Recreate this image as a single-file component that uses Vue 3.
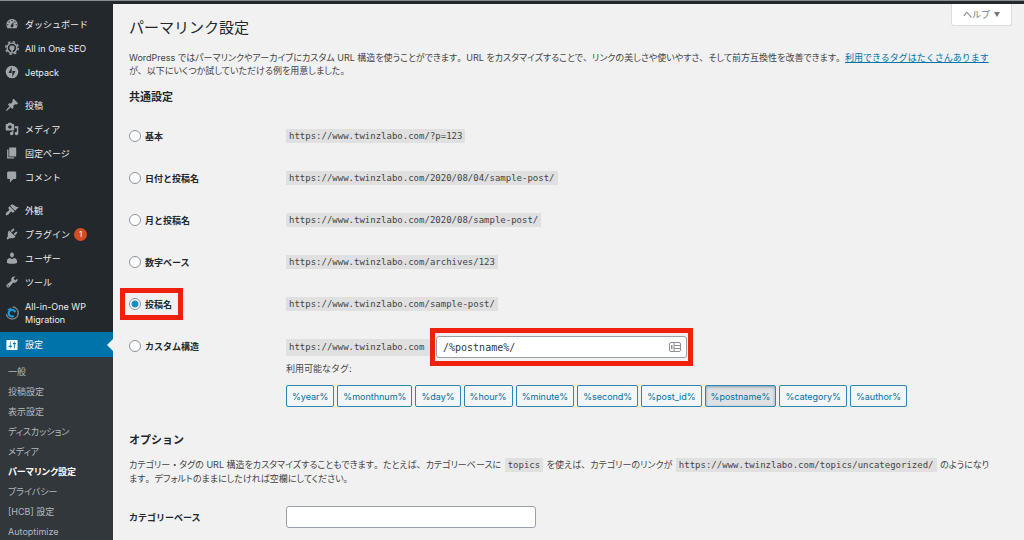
<script setup>
import { ref } from 'vue'

const menuGroups = [
  [
    {
      label: 'ダッシュボード',
      path: 'M3.76 16h12.48c1.1-1.37 1.76-3.11 1.76-5 0-4.42-3.58-8-8-8s-8 3.58-8 8c0 1.89.66 3.63 1.76 5zM10 4c.55 0 1 .45 1 1s-.45 1-1 1-1-.45-1-1 .45-1 1-1zM6 6c.55 0 1 .45 1 1s-.45 1-1 1-1-.45-1-1 .45-1 1-1zm8 0c.55 0 1 .45 1 1s-.45 1-1 1-1-.45-1-1 .45-1 1-1zm-5.37 5.55L12 7v6c0 1.1-.9 2-2 2s-2-.9-2-2c0-.57.24-1.08.63-1.45zM4 10c.55 0 1 .45 1 1s-.45 1-1 1-1-.45-1-1 .45-1 1-1zm12 0c.55 0 1 .45 1 1s-.45 1-1 1-1-.45-1-1 .45-1 1-1z',
    },
    { label: 'All in One SEO', icon: 'seo' },
    { label: 'Jetpack', icon: 'jetpack' },
  ],
  [
    {
      label: '投稿',
      path: 'M10.44 3.02l1.82-1.82 6.36 6.35-1.83 1.82c-1.05-.68-2.48-.57-3.41.36l-.75.75c-.92.93-1.04 2.35-.35 3.41l-1.83 1.82-2.41-2.41-2.8 2.79c-.42.42-3.38 2.71-3.8 2.29s1.86-3.39 2.28-3.81l2.79-2.79L4.1 9.36l1.83-1.82c1.05.69 2.48.57 3.4-.36l.75-.75c.93-.92 1.05-2.35.36-3.41z',
    },
    {
      label: 'メディア',
      path: 'M13 11V4c0-.55-.45-1-1-1h-1.67L9 1H5L3.67 3H2c-.55 0-1 .45-1 1v7c0 .55.45 1 1 1h10c.55 0 1-.45 1-1zM7 4.5c1.38 0 2.5 1.12 2.5 2.5S8.38 9.5 7 9.5 4.5 8.38 4.5 7 5.62 4.5 7 4.5zM14 6h5v10.5c0 1.38-1.12 2.5-2.5 2.5S14 17.88 14 16.5s1.12-2.5 2.5-2.5c.17 0 .34.02.5.05V9h-3V6zm-4 8.05V13h2v3.5c0 1.38-1.12 2.5-2.5 2.5S7 17.88 7 16.5 8.12 14 9.5 14c.17 0 .34.02.5.05z',
    },
    { label: '固定ページ', path: 'M6 15V2h10v13H6zm-1 1h8v2H3V5h2v11z' },
    {
      label: 'コメント',
      path: 'M5 2h9c1.1 0 2 .9 2 2v7c0 1.1-.9 2-2 2h-2l-5 5v-5H5c-1.1 0-2-.9-2-2V4c0-1.1.9-2 2-2z',
    },
  ],
  [
    {
      label: '外観',
      path: 'M14.48 11.06L7.41 3.99l1.5-1.5c.5-.56 2.3-.47 3.51.32 1.21.8 1.43 1.28 2.91 2.1 1.18.64 2.45 1.26 4.45.85zm-.71.71L6.7 4.7 4.93 6.47c-.39.39-.39 1.02 0 1.41l1.06 1.06c.39.39.39 1.03 0 1.42-.6.6-1.43 1.11-2.21 1.69-.35.26-.7.53-1.01.84C1.43 14.23.4 16.08 1.4 17.07c.99 1 2.84-.03 4.18-1.36.31-.31.58-.66.85-1.02.57-.78 1.08-1.61 1.69-2.21.39-.39 1.02-.39 1.41 0l1.06 1.06c.39.39 1.02.39 1.41 0z',
    },
    {
      label: 'プラグイン',
      count: 1,
      path: 'M13.11 4.36L9.87 7.6 8 5.73l3.24-3.24c.35-.34 1.05-.2 1.56.32.52.51.66 1.21.31 1.55zm-8 1.77l.91-1.12 9.01 9.01-1.19.84c-.71.71-2.63 1.16-3.82 1.16H6.14L4.9 17.26c-.59.59-1.54.59-2.12 0-.59-.58-.59-1.53 0-2.12l1.24-1.24v-3.88c0-1.13.4-3.19 1.09-3.89zm7.26 3.97l3.24-3.24c.34-.35 1.04-.21 1.55.31.52.51.66 1.21.31 1.55l-3.24 3.25z',
    },
    {
      label: 'ユーザー',
      path: 'M10 9.25c-2.27 0-2.73-3.44-2.73-3.44C7 4.02 7.82 2 9.97 2c2.16 0 2.98 2.02 2.71 3.81 0 0-.41 3.44-2.68 3.44zm0 2.57L12.72 10c2.39 0 4.52 2.33 4.52 4.53v2.49s-3.65 1.13-7.24 1.13c-3.65 0-7.24-1.13-7.24-1.13v-2.49c0-2.25 1.94-4.48 4.47-4.48z',
    },
    {
      label: 'ツール',
      path: 'M16.68 9.77c-1.34 1.34-3.3 1.67-4.95.99l-5.41 6.52c-.99.99-2.59.99-3.58 0s-.99-2.59 0-3.57l6.52-5.42c-.68-1.65-.35-3.61.99-4.95 1.28-1.28 3.12-1.62 4.72-1.06l-2.89 2.89 2.82 2.82 2.86-2.87c.53 1.58.18 3.39-1.08 4.65zM3.81 16.21c.4.39 1.04.39 1.43 0 .4-.4.4-1.04 0-1.43-.39-.4-1.03-.4-1.43 0-.39.39-.39 1.03 0 1.43z',
    },
    { label: 'All-in-One WP Migration', icon: 'migration', tall: true },
    {
      label: '設定',
      current: true,
      path: 'M18 16V4c0-.55-.45-1-1-1H3c-.55 0-1 .45-1 1v12c0 .55.45 1 1 1h14c.55 0 1-.45 1-1zM8 11h1c.55 0 1 .45 1 1s-.45 1-1 1H8v1.5c0 .28-.22.5-.5.5s-.5-.22-.5-.5V13H6c-.55 0-1-.45-1-1s.45-1 1-1h1V5.5c0-.28.22-.5.5-.5s.5.22.5.5V11zm5-2h-1c-.55 0-1-.45-1-1s.45-1 1-1h1V5.5c0-.28.22-.5.5-.5s.5.22.5.5V7h1c.55 0 1 .45 1 1s-.45 1-1 1h-1v5.5c0 .28-.22.5-.5.5s-.5-.22-.5-.5V9z',
    },
  ],
]

const submenu = [
  '一般',
  '投稿設定',
  '表示設定',
  'ディスカッション',
  'メディア',
  'パーマリンク設定',
  'プライバシー',
  '[HCB] 設定',
  'Autoptimize',
]

const structures = [
  { value: 'plain', label: '基本', url: 'https://www.twinzlabo.com/?p=123' },
  { value: 'day', label: '日付と投稿名', url: 'https://www.twinzlabo.com/2020/08/04/sample-post/' },
  { value: 'month', label: '月と投稿名', url: 'https://www.twinzlabo.com/2020/08/sample-post/' },
  { value: 'numeric', label: '数字ベース', url: 'https://www.twinzlabo.com/archives/123' },
  { value: 'postname', label: '投稿名', url: 'https://www.twinzlabo.com/sample-post/' },
]

const tags = ['year', 'monthnum', 'day', 'hour', 'minute', 'second', 'post_id', 'postname', 'category', 'author']

const selected = ref('postname')
const custom = ref('/%postname%/')
const categoryBase = ref('')
</script>

<template>
  <div class="admin">
    <div class="admin-bar"></div>
    <div class="admin-body">
      <nav class="side">
        <ul v-for="(group, i) in menuGroups" :key="i" class="menu">
          <li v-for="item in group" :key="item.label">
            <a href="#" class="menu-link" :class="{ current: item.current, tall: item.tall }">
              <svg v-if="item.path" class="menu-icon" viewBox="0 0 20 20">
                <path :d="item.path" fill="currentColor" fill-rule="evenodd" />
              </svg>
              <svg v-else-if="item.icon === 'seo'" class="menu-icon" viewBox="0 0 20 20">
                <circle cx="10" cy="10" r="7" fill="none" stroke="currentColor" stroke-width="2" />
                <circle cx="10" cy="10" r="9" fill="none" stroke="currentColor" stroke-width="2" stroke-dasharray="3.5 3.57" />
                <path d="M6.5 7.5h1.6V5.6h1v1.9h1.8V5.6h1v1.9h1.6v3c0 1.6-1 2.7-2.5 3V16H9v-2.5c-1.5-.3-2.5-1.4-2.5-3z" fill="currentColor" />
              </svg>
              <svg v-else-if="item.icon === 'jetpack'" class="menu-icon" viewBox="0 0 20 20">
                <path d="M10 1a9 9 0 1 0 0 18 9 9 0 0 0 0-18zM9.5 11.5H5l4.5-8.7zm1 5.7V8.5H15z" fill="currentColor" fill-rule="evenodd" />
              </svg>
              <svg v-else class="menu-icon" viewBox="0 0 20 20">
                <path d="M11 1.5a8.5 8.5 0 1 1-9 10" fill="none" stroke="#82878c" stroke-width="2" />
                <path d="M14.5 9a4.7 4.7 0 1 0-2 5.2" fill="none" stroke="#1b9ad6" stroke-width="3" />
                <path d="M3 5l6-3-.5 6z" fill="#1b9ad6" />
              </svg>
              <span>{{ item.label }}</span>
              <span v-if="item.count" class="count">{{ item.count }}</span>
            </a>
          </li>
        </ul>
        <ul class="submenu">
          <li v-for="name in submenu" :key="name">
            <a href="#" :class="{ current: name === 'パーマリンク設定' }">{{ name }}</a>
          </li>
        </ul>
      </nav>

      <main class="content">
        <button type="button" class="help">ヘルプ <span class="caret"></span></button>

        <h1>パーマリンク設定</h1>
        <p class="text">
          WordPress ではパーマリンクやアーカイブにカスタム URL 構造を使うことができます<span class="full">。</span>URL をカスタマイズすることで<span class="full">、</span>リンクの美しさや使いやすさ<span class="full">、</span>そして前方互換性を改善できます<span class="full">。</span><a href="#" class="full">利用できるタグはたくさんあります</a><br />
          が<span class="full">、</span>以下にいくつか試していただける例を用意しました<span class="full">。</span>
        </p>

        <h2>共通設定</h2>
        <div class="form">
          <div v-for="s in structures" :key="s.value" class="row">
            <label class="choice" :class="{ marked: s.value === 'postname' }">
              <input v-model="selected" type="radio" name="structure" :value="s.value" />
              {{ s.label }}
            </label>
            <div><code>{{ s.url }}</code></div>
          </div>
          <div class="row row-custom">
            <label class="choice">
              <input v-model="selected" type="radio" name="structure" value="custom" />
              カスタム構造
            </label>
            <div>
              <div class="custom-line">
                <code>https://www.twinzlabo.com</code>
                <div class="custom-field marked">
                  <input v-model="custom" type="text" class="field" aria-label="カスタム構造" />
                  <svg class="card-icon" viewBox="0 0 12 10">
                    <rect x="0.5" y="0.5" width="11" height="9" rx="1.5" fill="#fff" stroke="#8f8f8f" />
                    <path d="M5 1v8M5 3.5h6M5 6.5h6" stroke="#8f8f8f" />
                    <path d="M2 3h1.500v4H2z" fill="#8f8f8f" />
                  </svg>
                </div>
              </div>
              <p class="tags-title">利用可能なタグ:</p>
              <div class="tags">
                <button v-for="tag in tags" :key="tag" type="button" class="tag" :class="{ active: tag === 'postname' }">
                  %{{ tag }}%
                </button>
              </div>
            </div>
          </div>
        </div>

        <h2>オプション</h2>
        <p class="text">
          カテゴリー<span class="full">・</span>タグの URL 構造をカスタマイズすることもできます<span class="full">。</span>たとえば<span class="full">、</span>カテゴリーベースに <code>topics</code> を使えば<span class="full">、</span>カテゴリーのリンクが <code>https://www.twinzlabo.com/topics/uncategorized/</code> のようになり<br />
          ます<span class="full">。</span>デフォルトのままにしたければ空欄にしてください<span class="full">。</span>
        </p>
        <div class="row row-base">
          <label for="category-base">カテゴリーベース</label>
          <input id="category-base" v-model="categoryBase" type="text" class="field base-field" />
        </div>
      </main>
    </div>
  </div>
</template>

<style>
body {
  background: #f1f1f1;
}
</style>

<style scoped>
.admin {
  min-height: 100vh;
  display: flex;
  flex-direction: column;
  font-family: Inter, 'Noto Sans CJK JP', sans-serif;
  font-size: 9px;
  line-height: 13px;
  color: #444;
}
.admin * {
  box-sizing: border-box;
}
.admin-bar {
  height: 4px;
  background: #23282d;
  border-top: 1px solid #8a8e91;
}
.admin-body {
  flex: 1;
  display: flex;
}

/* sidebar */
.side {
  flex: 0 0 113px;
  padding-top: 8px;
  background: #23282d;
  display: flex;
  flex-direction: column;
}
ul {
  margin: 0;
  padding: 0;
  list-style: none;
}
.menu + .menu {
  margin-top: 9px;
}
.menu-link {
  position: relative;
  display: flex;
  align-items: center;
  gap: 6px;
  min-height: 24px;
  padding: 5px 16px 5px 5px;
  color: #eee;
  text-decoration: none;
}
.menu-link.tall {
  padding-top: 6px;
  padding-bottom: 6px;
}
.menu-link.current {
  min-height: 25px;
  background: #0073aa;
  color: #fff;
}
.menu-link.current::after {
  content: '';
  position: absolute;
  right: 0;
  top: 7px;
  border: 6px solid transparent;
  border-left: 0;
  border-right-color: #f1f1f1;
}
.menu-icon {
  flex: 0 0 14px;
  height: 14px;
  color: #a0a5aa;
}
.current .menu-icon {
  color: #fff;
}
.count {
  flex: 0 0 13px;
  height: 13px;
  margin-left: -2px;
  border-radius: 50%;
  background: #d54e21;
  color: #fff;
  text-align: center;
  font-size: 8px;
}
.submenu {
  flex: 1;
  padding-top: 5px;
  background: #32373c;
}
.submenu a {
  display: block;
  height: 20px;
  padding-left: 8px;
  line-height: 20px;
  color: #b4b9be;
  text-decoration: none;
  font-feature-settings: 'palt';
}
.submenu a.current {
  color: #fff;
  font-weight: 700;
}
.submenu li:last-child a {
  height: 18px;
}

/* content */
.content {
  position: relative;
  flex: 1;
  min-width: 0;
  padding: 14px 12px 0 16px;
}
.help {
  position: absolute;
  top: 0;
  right: 12px;
  display: flex;
  align-items: center;
  gap: 4px;
  height: 22px;
  padding: 0 11px;
  border: 1px solid #ddd;
  border-top: 0;
  border-radius: 0 0 3px 3px;
  background: #fff;
  color: #72777c;
  font: inherit;
}
.caret {
  border: 3px solid transparent;
  border-top: 5px solid #72777c;
  border-bottom: 0;
}
h1 {
  margin: 0 0 13px;
  font-size: 15px;
  font-weight: 400;
  line-height: 20px;
  color: #23282d;
}
h2 {
  margin: 12px 0 10px;
  font-size: 11px;
  font-weight: 700;
  line-height: 16px;
  color: #23282d;
}
.text {
  margin: 0;
  font-feature-settings: 'palt';
}
/* punctuation keeps its full-width space */
.full {
  font-feature-settings: normal;
}
.text a {
  color: #0073aa;
}
code {
  padding: 2px 3px;
  background: #e0e0e0;
  font-family: 'DejaVu Sans Mono', monospace;
  font-size: 9px;
}
.text code {
  margin: 0 1px;
}
.row {
  display: grid;
  grid-template-columns: 157px 1fr;
  align-items: center;
  min-height: 42px;
}
.row label {
  font-weight: 700;
  color: #23282d;
}
.choice {
  display: flex;
  align-items: center;
  gap: 4px;
  justify-self: start;
  height: 14px;
  padding-right: 2px;
}
.choice input {
  appearance: none;
  width: 12px;
  height: 12px;
  margin: 0;
  border: 1px solid #8c959d;
  border-radius: 50%;
  background: #fff;
}
.choice input:checked {
  background: radial-gradient(circle, #1e8cbe 0 3px, #fff 4px);
}
.marked {
  outline: 5px solid #f0200f;
  outline-offset: 4px;
}
.row-custom {
  align-items: start;
  padding-top: 9px;
}
.row-custom > .choice {
  margin-top: 5px;
}
.custom-line {
  display: grid;
  grid-template-columns: 144px 251px;
  column-gap: 6px;
  align-items: center;
}
.custom-line .marked {
  outline-offset: 1px;
}
.custom-field {
  position: relative;
  padding: 2px 0;
}
.field {
  display: block;
  width: 100%;
  height: 22px;
  padding: 0 6px;
  border: 1px solid #9aa0a8;
  border-radius: 3px;
  background: #fff;
  color: #32373c;
  font-family: 'DejaVu Sans Mono', monospace;
  font-size: 10px;
}
.card-icon {
  position: absolute;
  right: 6px;
  top: 8px;
  width: 12px;
  height: 10px;
}
.tags-title {
  margin: 2px 0 10px;
}
.tags {
  display: flex;
  flex-wrap: wrap;
  gap: 3px;
}
.tag {
  height: 22px;
  padding: 0 5px;
  border: 1px solid #2f86b0;
  border-radius: 2px;
  background: #f3f5f6;
  color: #0071a1;
  font: inherit;
}
.tag.active {
  background: #dfe1e4;
  box-shadow: inset 0 1px 3px #8a9aa5;
}
.form + h2 {
  margin-top: 25px;
}
.row-base {
  margin-top: 11px;
}
.base-field {
  max-width: 250px;
}
</style>
